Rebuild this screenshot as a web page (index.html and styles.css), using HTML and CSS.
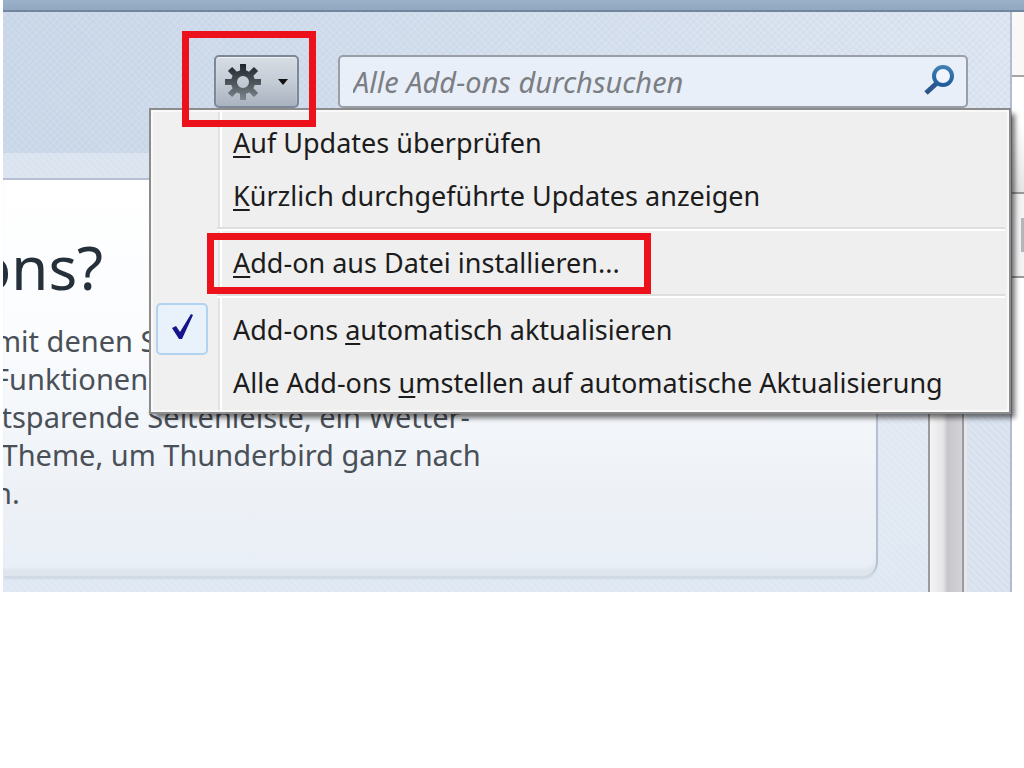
FILE: index.html
```html
<!DOCTYPE html>
<html lang="de">
<head>
    <meta charset="UTF-8">
    <meta name="viewport" content="width=device-width, initial-scale=1.0">
    <title>Add-ons</title>
    <link rel="stylesheet" href="styles.css">
</head>
<body>

<div class="window">
    <div class="titlebar"></div>
    <div class="main">
        <div class="manager">
            <header class="toolbar">
                <div class="tools">
                    <button class="gear-button" type="button" aria-label="Extras">
                        <svg width="38" height="38" viewBox="-19 -19 38 38">
                            <defs>
                                <linearGradient id="metal" x1="0" y1="-18" x2="0" y2="18" gradientUnits="userSpaceOnUse">
                                    <stop offset="0" stop-color="#1f262b"/>
                                    <stop offset="0.5" stop-color="#4c5459"/>
                                    <stop offset="1" stop-color="#7d868d"/>
                                </linearGradient>
                            </defs>
                            <g stroke="url(#metal)" fill="none">
                                <circle r="9" stroke-width="6"/>
                                <path stroke-width="6" d="M0-18L0.1-10M0 10L0.1 18M-18 0L-10 0.1M10 0L18 0.1M-13-13L-8-8M13-13L8-8M-13 13L-8 8M13 13L8 8"/>
                            </g>
                        </svg>
                        <svg width="12" height="8" viewBox="0 0 12 8"><path d="M1 1H11L6 7Z" fill="#111"/></svg>
                    </button>
                    <span class="marker marker-gear"></span>
                </div>
                <form class="search">
                    <input type="text" placeholder="Alle Add-ons durchsuchen" aria-label="Alle Add-ons durchsuchen">
                    <button type="button" aria-label="Suchen">
                        <svg width="34" height="34" viewBox="0 0 34 34">
                            <defs>
                                <linearGradient id="glass" x1="0" y1="0" x2="0" y2="1">
                                    <stop offset="0" stop-color="#3c7fb1"/>
                                    <stop offset="1" stop-color="#1f5d9b"/>
                                </linearGradient>
                            </defs>
                            <path d="M14 17L2 28" stroke="#2f568c" stroke-width="5"/>
                            <circle cx="19" cy="11" r="9" fill="#f1f5fb" stroke="url(#glass)" stroke-width="4"/>
                        </svg>
                    </button>
                </form>

                <div class="menu">
                    <button class="menu-item" type="button"><u>A</u>uf Updates überprüfen</button>
                    <button class="menu-item" type="button"><u>K</u>ürzlich durchgeführte Updates anzeigen</button>
                    <div class="separator"></div>
                    <button class="menu-item" type="button"><u>A</u>dd-on aus Datei installieren...<span class="marker marker-install"></span></button>
                    <div class="separator"></div>
                    <label class="menu-item">
                        <input type="checkbox" checked>
                        <svg class="check" width="24" height="28" viewBox="0 0 24 28"><path d="M1 15L5 13L9 19L20 1L22 2L11 26H8Z" fill="#14148c"/></svg>
                        <span>Add-ons <u>a</u>utomatisch aktualisieren</span>
                    </label>
                    <button class="menu-item" type="button">Alle Add-ons <u>u</u>mstellen auf automatische Aktualisierung</button>
                </div>
            </header>

            <div class="content">
                <div class="page">
                    <section class="card">
                        <h1>ons?</h1>
                        <p>mit denen S<br>Funktionen<br>itsparende Seitenleiste, ein Wetter-<br>&nbsp;Theme, um Thunderbird ganz nach<br>n.</p>
                    </section>
                </div>
                <div class="scrollbar"></div>
                <div class="gutter"></div>
            </div>
        </div>
        <aside class="side">
            <div class="side-head"></div>
            <div class="side-top"></div>
            <div class="side-tab"><span></span></div>
        </aside>
    </div>
</div>

</body>
</html>
```
FILE: styles.css
```css
* {
    box-sizing: border-box;
}
body {
    margin: 0;
    background: #fff;
    font-family: "Noto Sans", sans-serif;
    color: #1c1c1c;
}
button, input {
    font: inherit;
    color: inherit;
}
.window {
    margin-left: 3px;
    overflow: hidden;
}
.titlebar {
    height: 12px;
    background: linear-gradient(#9bb0c9, #92a8c1);
    border-bottom: 2px solid #71869d;
}
.main {
    display: flex;
}
.manager {
    flex: 1;
    min-width: 0;
    border-right: 2px solid #b3bccf;
}
.toolbar {
    position: relative;
    display: flex;
    align-items: flex-start;
    gap: 39px;
    height: 141px;
    padding: 43px 42px 0 211px;
    background:
        repeating-linear-gradient(45deg, rgba(110, 140, 180, 0.04) 0 2px, transparent 2px 5px),
        repeating-linear-gradient(-45deg, rgba(110, 140, 180, 0.04) 0 2px, transparent 2px 5px),
        linear-gradient(to right, #cddaea, #dfe7f2);
}

/* gear button */
.tools {
    position: relative;
}
.gear-button {
    display: flex;
    align-items: center;
    justify-content: space-between;
    width: 85px;
    height: 53px;
    padding: 0 8px 0 8px;
    border: 2px solid #7d8896;
    border-radius: 5px;
    background: linear-gradient(#d8dde4, #c4ccd6 50%, #a9b2bf);
    box-shadow: inset 0 1px 1px #eef1f5;
}
.marker {
    position: absolute;
    z-index: 2;
    border: 7px solid #ec111b;
    pointer-events: none;
}
.marker-gear {
    inset: -24px -17px -19px -32px;
}
.marker-install {
    left: 56px;
    top: -3px;
    width: 444px;
    height: 61px;
}

/* search box */
.search {
    flex: 1;
    display: flex;
    align-items: center;
    height: 53px;
    padding: 0 8px 0 10px;
    border: 2px solid #999ea7;
    border-radius: 5px;
    background: #e9eff8;
}
.search input {
    flex: 1;
    min-width: 0;
    padding: 0 3px;
    border: 0;
    outline: 0;
    background: none;
    font-size: 29px;
    font-style: italic;
}
.search input::placeholder {
    color: #7b7e83;
    opacity: 1;
}
.search button {
    display: flex;
    padding: 0;
    border: 0;
    background: none;
}

/* drop-down menu */
.menu {
    position: absolute;
    z-index: 1;
    top: 96px;
    left: 146px;
    right: -1px;
    padding: 6px 0 3px;
    border: 2px solid #8c8c8c;
    background: linear-gradient(to right, #f0f0f0 67px, #e2e2e2 67px 69px, #fff 69px 71px, #efefef 71px);
    box-shadow: inset 0 0 0 2px #f9f9f9, 5px 5px 5px -1px rgba(0, 0, 0, 0.55);
}
.menu-item {
    position: relative;
    display: flex;
    align-items: center;
    width: 100%;
    height: 53px;
    padding: 0 0 0 82px;
    border: 0;
    background: none;
    font-size: 27px;
    text-align: left;
    white-space: pre;
}
.menu-item u {
    text-decoration-thickness: 2px;
    text-underline-offset: 3px;
}
.menu-item input {
    appearance: none;
    position: absolute;
    left: 5px;
    top: 0;
    width: 52px;
    height: 52px;
    margin: 0;
    border: 2px solid #b1d2f1;
    border-radius: 5px;
    background: #e9f1fa;
}
.check {
    position: absolute;
    left: 20px;
    top: 10px;
    pointer-events: none;
}
.separator {
    height: 4px;
    margin: 5px 4px 5px 66px;
    border-top: 2px solid #dedede;
    border-bottom: 2px solid #fff;
}

/* page behind the menu */
.content {
    display: flex;
}
.page {
    flex: 1;
    padding: 25px 50px 16px 0;
    background:
        repeating-linear-gradient(45deg, rgba(110, 140, 180, 0.03) 0 2px, transparent 2px 5px),
        linear-gradient(#dde5f1, #e5eaf4 50%, #e1eaf4);
}
.card {
    height: 398px;
    padding: 52px 0 0;
    border: 2px solid #b5c0d2;
    border-width: 2px 2px 0 0;
    border-radius: 0 0 14px 0;
    background: linear-gradient(#fff, #fafcfe 40%, #edf1f6 80%, #e9eff7);
    box-shadow: inset 0 -8px 3px -1px #dfe5ec, 0 4px 2px -1px #cfdae6;
    overflow: hidden;
}
.card h1 {
    margin: 0 0 20px -28px;
    font-size: 60px;
    font-weight: 400;
    line-height: 70px;
    color: #26303a;
}
.card p {
    margin: 0 0 0 -9px;
    font-size: 29px;
    line-height: 38px;
    white-space: nowrap;
    color: #4a5058;
}
.scrollbar {
    width: 36px;
    border: 2px solid #9b9b9f;
    border-width: 0 2px;
    background: linear-gradient(to right, #f5f4f4, #e6e5e7 40%, #c6c6cb 55%, #d3d3d7);
}
.gutter {
    width: 46px;
    border-left: 3px solid #e4e6ea;
    background:
        repeating-linear-gradient(45deg, rgba(110, 140, 180, 0.05) 0 2px, transparent 2px 5px),
        #dbe4f0;
}

/* neighbouring window strip */
.side {
    width: 12px;
}
.side-head {
    height: 65px;
    background: #f8f8f6;
    border-bottom: 2px solid #a5a5a5;
}
.side-top {
    height: 117px;
    background: linear-gradient(#fff 40%, #e4e4e4);
    border-bottom: 2px solid #999;
}
.side-tab {
    display: flex;
    justify-content: flex-end;
    align-items: center;
    height: 84px;
    background: #f3f3f3;
    border-bottom: 2px solid #999;
}
.side-tab span {
    width: 3px;
    height: 34px;
    background: #b4b6ba;
}
```
